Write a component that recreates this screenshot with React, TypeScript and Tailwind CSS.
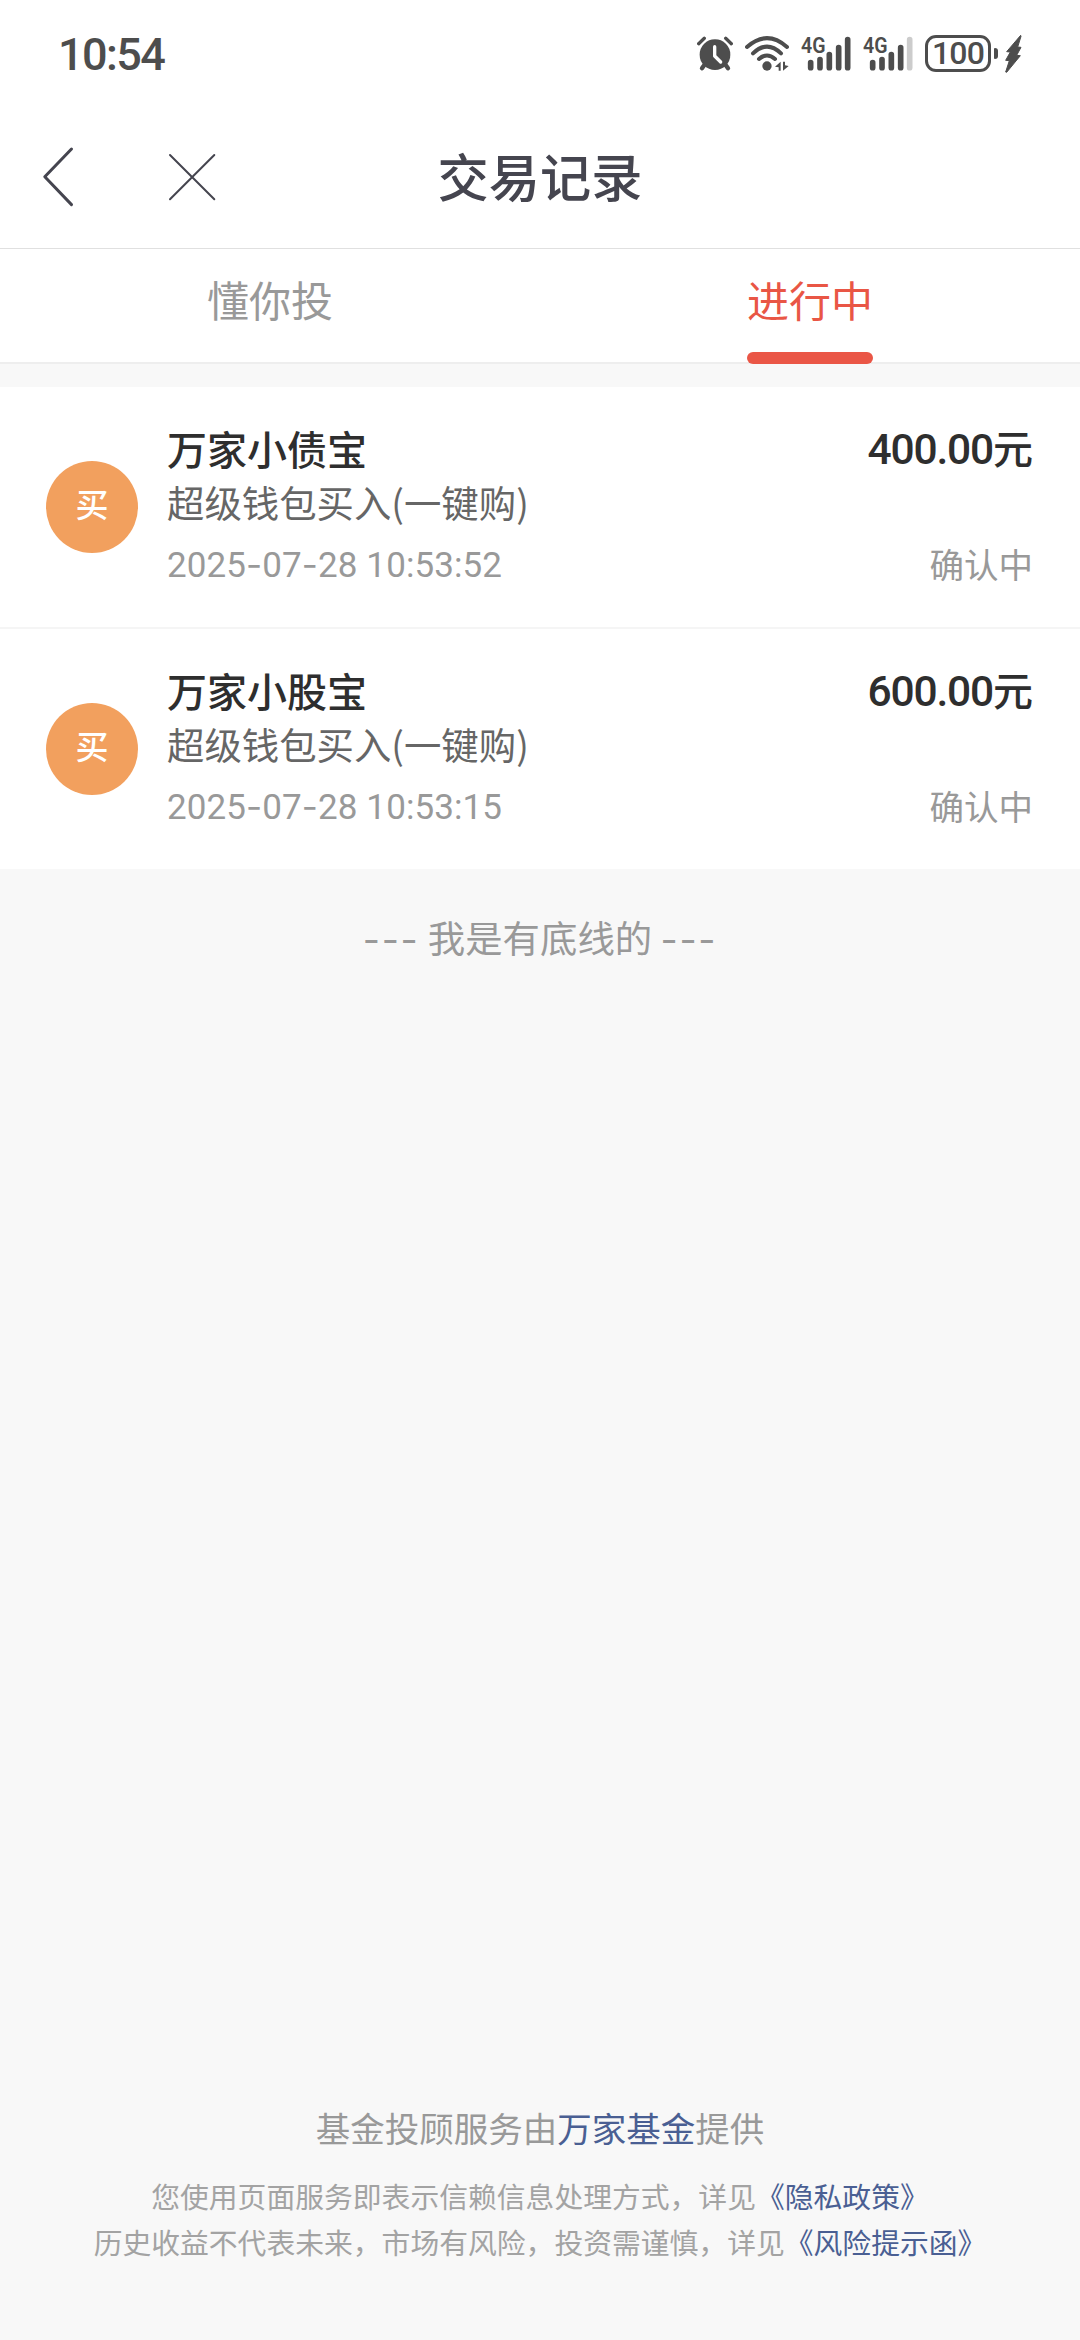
import React from 'react';

const INK = '#4d4d4d';

function AlarmIcon() {
  return (
    <svg width="36" height="36" viewBox="48 48 108 108" fill="none">
      <circle cx="102" cy="104" r="46" fill={INK} />
      <path d="M53 71 L70 55 M151 71 L134 55" stroke={INK} strokeWidth="10" strokeLinecap="round" />
      <path d="M70 135 L63 145 M134 135 L141 145" stroke={INK} strokeWidth="13" strokeLinecap="round" />
      <path d="M101 80 V108 L119 126" stroke="#fff" strokeWidth="10" strokeLinecap="round" strokeLinejoin="round" />
    </svg>
  );
}

function WifiIcon() {
  return (
    <svg width="44" height="36" viewBox="192 48 132 108" fill="none">
      <g stroke={INK} strokeWidth="12" strokeLinecap="round">
        <path d="M198 81 Q258 28 318 81" />
        <path d="M216 100 Q258 60 300 100" />
        <path d="M234 117 Q258 96 282 117" />
      </g>
      <circle cx="258" cy="138" r="14" fill={INK} />
      <path d="M282 140 L299 125 V152 H293 V142 Z M323 138 L306 152 V125 H312 V136 Z" fill={INK} />
    </svg>
  );
}

function SignalIcon({ last }: { last: string }) {
  return (
    <div className="relative h-9 w-[52px]">
      <svg className="absolute inset-0" width="52" height="36" viewBox="358 48 156 108" fill="none">
        <g stroke={INK} strokeWidth="17" strokeLinecap="round">
          <path d="M390 128 V143" />
          <path d="M418 119 V143" />
          <path d="M446 104 V143" />
          <path d="M474 83 V143" />
          <path d="M501 59 V143" stroke={last} />
        </g>
      </svg>
      <span className="absolute left-[0.5px] top-[-1px] origin-left scale-x-[0.87] font-['Roboto'] text-[22.5px] font-semibold leading-[20px] text-[#4d4d4d]">
        4G
      </span>
    </div>
  );
}

function BatteryIcon() {
  return (
    <div className="flex items-center">
      <div className="flex h-[37px] w-[66px] items-center justify-center rounded-[11px] border-[3px] border-[#4d4d4d]">
        <span className="relative top-[-0.5px] font-['Roboto'] text-[32px] font-medium leading-[31px] tracking-[-0.8px] text-[#4d4d4d]">100</span>
      </div>
      <div className="ml-[3px] h-[11px] w-[4px] rounded-r-[3px] rounded-l-[1px] bg-[#4d4d4d]" />
    </div>
  );
}

function BoltIcon() {
  return (
    <svg width="17" height="38" viewBox="973 43 51 114">
      <path d="M1020 44 L978 93 L989 94 L975 119 L986 120 L975 154 L978 155 L1019 105 L1008 104 L1021 80 L1011 79 L1021 47 Z" fill={INK} stroke={INK} strokeWidth="3" strokeLinejoin="round" />
    </svg>
  );
}

/** Latin text in Roboto, with wide hyphens taken from Inter. */
function Stamp({ text }: { text: string }) {
  return (
    <>
      {text.split('-').map((part, i) => (
        <React.Fragment key={i}>
          {i > 0 && <span className="font-['Inter']">-</span>}
          {part}
        </React.Fragment>
      ))}
    </>
  );
}

function Dashes() {
  return <span className="font-['Inter'] tracking-[1.7px]">---</span>;
}

interface RecordItem {
  name: string;
  detail: string;
  time: string;
  amount: string;
}

const records: RecordItem[] = [
  { name: '万家小债宝', detail: '超级钱包买入(一键购)', time: '2025-07-28 10:53:52', amount: '400.00' },
  { name: '万家小股宝', detail: '超级钱包买入(一键购)', time: '2025-07-28 10:53:15', amount: '600.00' },
];

function RecordRow({ r }: { r: RecordItem }) {
  return (
    <div className="flex h-60 bg-white pl-[46px] pr-[47px]">
      <div className="mt-[74px] flex size-[92px] shrink-0 justify-center rounded-full bg-[#f2a05e] text-[33px] font-medium leading-[84px] text-white">
        买
      </div>
      <div className="ml-[29px] flex-1 whitespace-nowrap pt-[33px]">
        <div className="text-[40px] font-medium leading-[56px] text-[#2e2e2e]">{r.name}</div>
        <div className="text-[37.4px] leading-[52px] text-[#666]">{r.detail}</div>
        <div className="mt-[10px] font-['Roboto'] text-[35px] leading-[52px] tracking-[0.1px] text-[#999]">
          <Stamp text={r.time} />
        </div>
      </div>
      <div className="flex flex-col items-end whitespace-nowrap pt-[32px]">
        <div className="text-[40px] font-medium leading-[56px] text-[#2e2e2e]">
          <span className="font-['Roboto'] text-[42.5px] tracking-[-1.2px]">{r.amount}</span>元
        </div>
        <div className="mt-[59px] text-[34.5px] leading-[52px] text-[#999]">确认中</div>
      </div>
    </div>
  );
}

export default function App() {
  return (
    <div className="flex h-[2340px] w-[1080px] flex-col overflow-hidden bg-[#f8f8f8] font-['Noto_Sans_CJK_SC',sans-serif]">
      <div className="flex h-[107px] items-center justify-between bg-white pl-[58px] pr-[58px]">
        <span className="relative top-px font-['Roboto'] text-[45px] font-medium leading-[54px] tracking-[-1.6px] text-[#4d4d4d]">10:54</span>
        <div className="flex items-center">
          <AlarmIcon />
          <div className="ml-3"><WifiIcon /></div>
          <div className="ml-[11px]"><SignalIcon last={INK} /></div>
          <div className="ml-[10px]"><SignalIcon last="#cccccc" /></div>
          <div className="ml-[11px]"><BatteryIcon /></div>
          <div className="ml-[7px]"><BoltIcon /></div>
        </div>
      </div>

      <div className="relative flex h-[142px] justify-center border-b border-[#e0e0e0] bg-white pt-[33px]">
        <div className="absolute left-[40px] top-[39px] flex items-center">
          <svg width="36" height="62" viewBox="40 146 36 62" fill="none">
            <path d="M71.5 149 L44.8 176.8 L71.5 204.6" stroke="#45454f" strokeWidth="3" strokeLinecap="round" strokeLinejoin="round" />
          </svg>
          <svg className="ml-[92px]" width="48" height="48" viewBox="168 153 48 48" fill="none">
            <path d="M170 155 L214.3 199.3 M214.3 155 L170 199.3" stroke="#45454f" strokeWidth="2" strokeLinecap="round" />
          </svg>
        </div>
        <h1 className="text-[51.2px] font-medium leading-[70px] text-[#45454f]">交易记录</h1>
      </div>

      <div className="flex h-[115px] border-b-2 border-[#eeeeee] bg-white text-[42px] leading-[60px]">
        <div className="flex-1 pt-[20px] text-center text-[#999]">懂你投</div>
        <div className="relative flex-1 pt-[20px] text-center text-[#e95645]">
          进行中
          <div className="absolute left-1/2 top-[103px] h-3 w-[126px] -translate-x-1/2 rounded-full bg-[#ea5646]" />
        </div>
      </div>

      <div className="mt-[23px] flex flex-col gap-[2px] bg-[#f5f5f5]">
        {records.map((r) => (
          <RecordRow key={r.name} r={r} />
        ))}
      </div>

      <div className="mt-[42px] text-center text-[37.4px] leading-[52px] text-[#999]">
        <Dashes /> 我是有底线的 <Dashes />
      </div>

      <div className="mt-auto pb-[75px] text-center">
        <div className="text-[34.5px] leading-[52px] text-[#999]">
          基金投顾服务由<span className="text-[#4a5f93]">万家基金</span>提供
        </div>
        <div className="mt-[20px] text-[28.8px] leading-[46px] text-[#a3a3a3]">
          您使用页面服务即表示信赖信息处理方式，详见<span className="text-[#4a5f93]">《隐私政策》</span>
          <br />
          历史收益不代表未来，市场有风险，投资需谨慎，详见<span className="text-[#4a5f93]">《风险提示函》</span>
        </div>
      </div>
    </div>
  );
}
